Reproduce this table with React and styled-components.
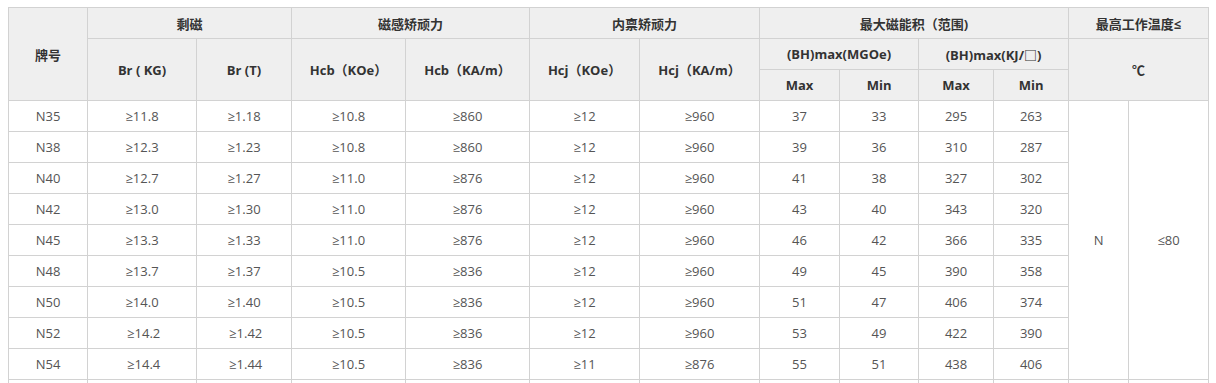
import styled, { createGlobalStyle } from "styled-components";

const GlobalStyle = createGlobalStyle`
  body {
    margin: 0;
    background: #fff;
    font-family: "Open Sans", "Noto Sans CJK SC", sans-serif;
  }
`;

const Page = styled.div`
  padding: 7px 8px;
`;

const Table = styled.table`
  border-collapse: collapse;
  table-layout: fixed;
  width: 1200px;
  font-size: 13px;
  color: #555;
`;

const Th = styled.th`
  background: #efefef;
  border: 1px solid #d2d2d2;
  height: 30px;
  padding: 0;
  text-align: center;
  font-weight: bold;
  color: #333;
`;

const Td = styled.td`
  border: 1px solid #d2d2d2;
  height: 30px;
  padding: 0;
  text-align: center;
  white-space: pre;
`;

const widths = [79, 109, 95, 114, 124, 110, 120, 80, 79, 75, 75, 60, 80];

const rows = [
  ["N35", "≥11.8", "≥1.18", "≥10.8", "≥860", "≥12", "≥960", "37", "33", "295", "263"],
  ["N38", "≥12.3", "≥1.23", "≥10.8", "≥860", "≥12", "≥960", "39", "36", "310", "287"],
  ["N40", "≥12.7", "≥1.27", "≥11.0", "≥876", "≥12", "≥960", "41", "38", "327", "302"],
  ["N42", "≥13.0", "≥1.30", "≥11.0", "≥876", "≥12", "≥960", "43", "40", "343", "320"],
  ["N45", "≥13.3", "≥1.33", "≥11.0", "≥876", "≥12", "≥960", "46", "42", "366", "335"],
  ["N48", "≥13.7", "≥1.37", "≥10.5", "≥836", "≥12", "≥960", "49", "45", "390", "358"],
  ["N50", "≥14.0", "≥1.40", "≥10.5", "≥836", "≥12", "≥960", "51", "47", "406", "374"],
  ["N52", " ≥14.2", " ≥1.42", "≥10.5", "≥836", "≥12", "≥960", "53", "49", "422", "390"],
  ["N54", " ≥14.4", " ≥1.44", "≥10.5", "≥836", "≥11", "≥876", "55", "51", "438", "406"],
];

const App = () => {
  return (
    <Page>
      <GlobalStyle />
      <Table>
        <colgroup>
          {widths.map((w, i) => (
            <col key={i} style={{ width: w }} />
          ))}
        </colgroup>
        <thead>
          <tr>
            <Th rowSpan={3}>牌号</Th>
            <Th colSpan={2}>剩磁</Th>
            <Th colSpan={2}>磁感矫顽力</Th>
            <Th colSpan={2}>内禀矫顽力</Th>
            <Th colSpan={4}>最大磁能积（范围)</Th>
            <Th colSpan={2}>最高工作温度≤</Th>
          </tr>
          <tr>
            <Th rowSpan={2}>Br ( KG)</Th>
            <Th rowSpan={2}>Br (T)</Th>
            <Th rowSpan={2}>Hcb（KOe）</Th>
            <Th rowSpan={2}>Hcb（KA/m）</Th>
            <Th rowSpan={2}>Hcj（KOe）</Th>
            <Th rowSpan={2}>Hcj（KA/m）</Th>
            <Th colSpan={2}>(BH)max(MGOe)</Th>
            <Th colSpan={2}>(BH)max(KJ/□)</Th>
            <Th colSpan={2} rowSpan={2}>℃</Th>
          </tr>
          <tr>
            <Th>Max</Th>
            <Th>Min</Th>
            <Th>Max</Th>
            <Th>Min</Th>
          </tr>
        </thead>
        <tbody>
          {rows.map((r, i) => (
            <tr key={r[0]}>
              {r.map((c, j) => (
                <Td key={j}>{c}</Td>
              ))}
              {i === 0 && (
                <>
                  <Td rowSpan={9}>N</Td>
                  <Td rowSpan={9}>≤80</Td>
                </>
              )}
            </tr>
          ))}
          <tr>
            {widths.map((_, j) => (
              <Td key={j} />
            ))}
          </tr>
        </tbody>
      </Table>
    </Page>
  );
};

export default App;
